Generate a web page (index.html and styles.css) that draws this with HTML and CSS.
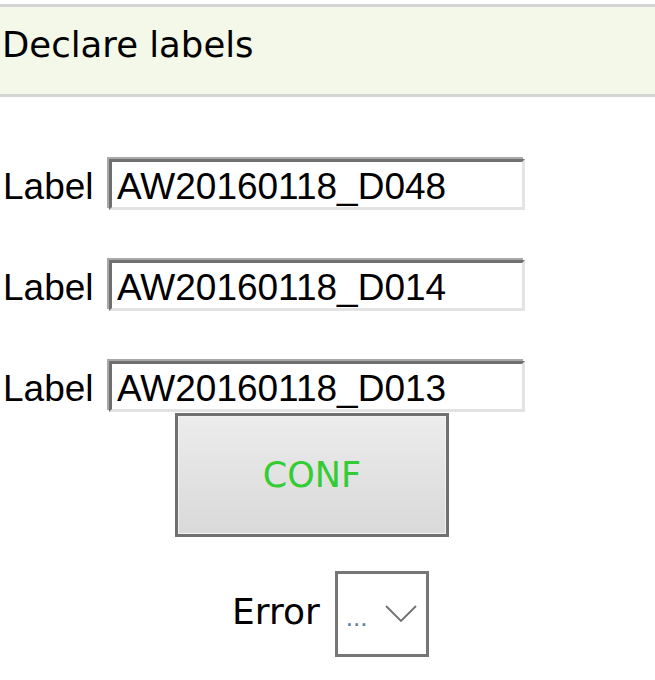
FILE: index.html
```html
<!DOCTYPE html>
<html lang="en">
<head>
    <meta charset="UTF-8">
    <meta name="viewport" content="width=device-width, initial-scale=1.0">
    <title>Declare labels</title>
    <link rel="stylesheet" href="styles.css">
</head>
<body>
    <div class="header">Declare labels</div>
    <form class="labels" onsubmit="event.preventDefault();">
        <div class="row">
            <label for="label1">Label</label>
            <input type="text" id="label1" value="AW20160118_D048">
        </div>
        <div class="row">
            <label for="label2">Label</label>
            <input type="text" id="label2" value="AW20160118_D014">
        </div>
        <div class="row">
            <label for="label3">Label</label>
            <input type="text" id="label3" value="AW20160118_D013">
        </div>
        <button type="submit" class="conf">CONF</button>
        <div class="error-row">
            <span class="error-label">Error</span>
            <div class="select">
                <span class="dots">...</span>
                <svg class="chevron" width="32" height="18" viewBox="0 0 32 18">
                    <polyline points="1,1 16,16 31,1" fill="none" stroke="#707070" stroke-width="1.8"/>
                </svg>
            </div>
        </div>
    </form>
</body>
</html>
```

FILE: styles.css
```css
body {
    margin: 0;
    font-family: "Liberation Sans", Arial, sans-serif;
    color: #000;
    background: #fff;
}
.header {
    margin-top: 4px;
    height: 40px;
    padding: 18px 0 29px 2px;
    border-top: 3px solid #d4d4d4;
    border-bottom: 3px solid #d4d4d4;
    background-color: #f4f8e8;
    font-family: "DejaVu Sans", Verdana, sans-serif;
    font-size: 35.5px;
    line-height: 40px;
}
.labels {
    margin: 0;
}
.row {
    display: flex;
    align-items: baseline;
    margin-top: 50px;
    padding-left: 3px;
}
.row:first-child {
    margin-top: 62px;
}
.row label {
    width: 106px;
    font-size: 37px;
}
.row input[type="text"] {
    box-sizing: border-box;
    width: 416px;
    height: 51px;
    margin: 0;
    padding: 5px 4px 0 5px;
    border: 3px solid;
    border-color: #707070 #e3e3e3 #e3e3e3 #707070;
    box-shadow: -2px -2px 0 #a9a9a9;
    background: #fff;
    font-family: "Liberation Sans", Arial, sans-serif;
    font-size: 37px;
    color: #000;
    outline: none;
}
.conf {
    display: block;
    box-sizing: border-box;
    width: 274px;
    height: 124px;
    margin: 1px 0 0 175px;
    border: 3px solid #707070;
    box-shadow: inset 0 0 0 1px #f2f2f2;
    background: linear-gradient(#ececec, #d9d9d9);
    font-family: "DejaVu Sans", Verdana, sans-serif;
    font-size: 35px;
    color: #33cc33;
    cursor: pointer;
}
.error-row {
    display: flex;
    align-items: center;
    margin-top: 34px;
    padding-left: 232px;
}
.error-label {
    margin-right: 15px;
    margin-bottom: 5px;
    font-family: "DejaVu Sans", Verdana, sans-serif;
    font-size: 36px;
}
.select {
    box-sizing: border-box;
    display: flex;
    align-items: center;
    width: 94px;
    height: 86px;
    padding-left: 8px;
    border: 3px solid #767676;
    background: #fff;
}
.dots {
    margin-top: 6px;
    font-size: 26px;
    color: #5b7fa6;
}
.chevron {
    margin-left: 18px;
}
```
